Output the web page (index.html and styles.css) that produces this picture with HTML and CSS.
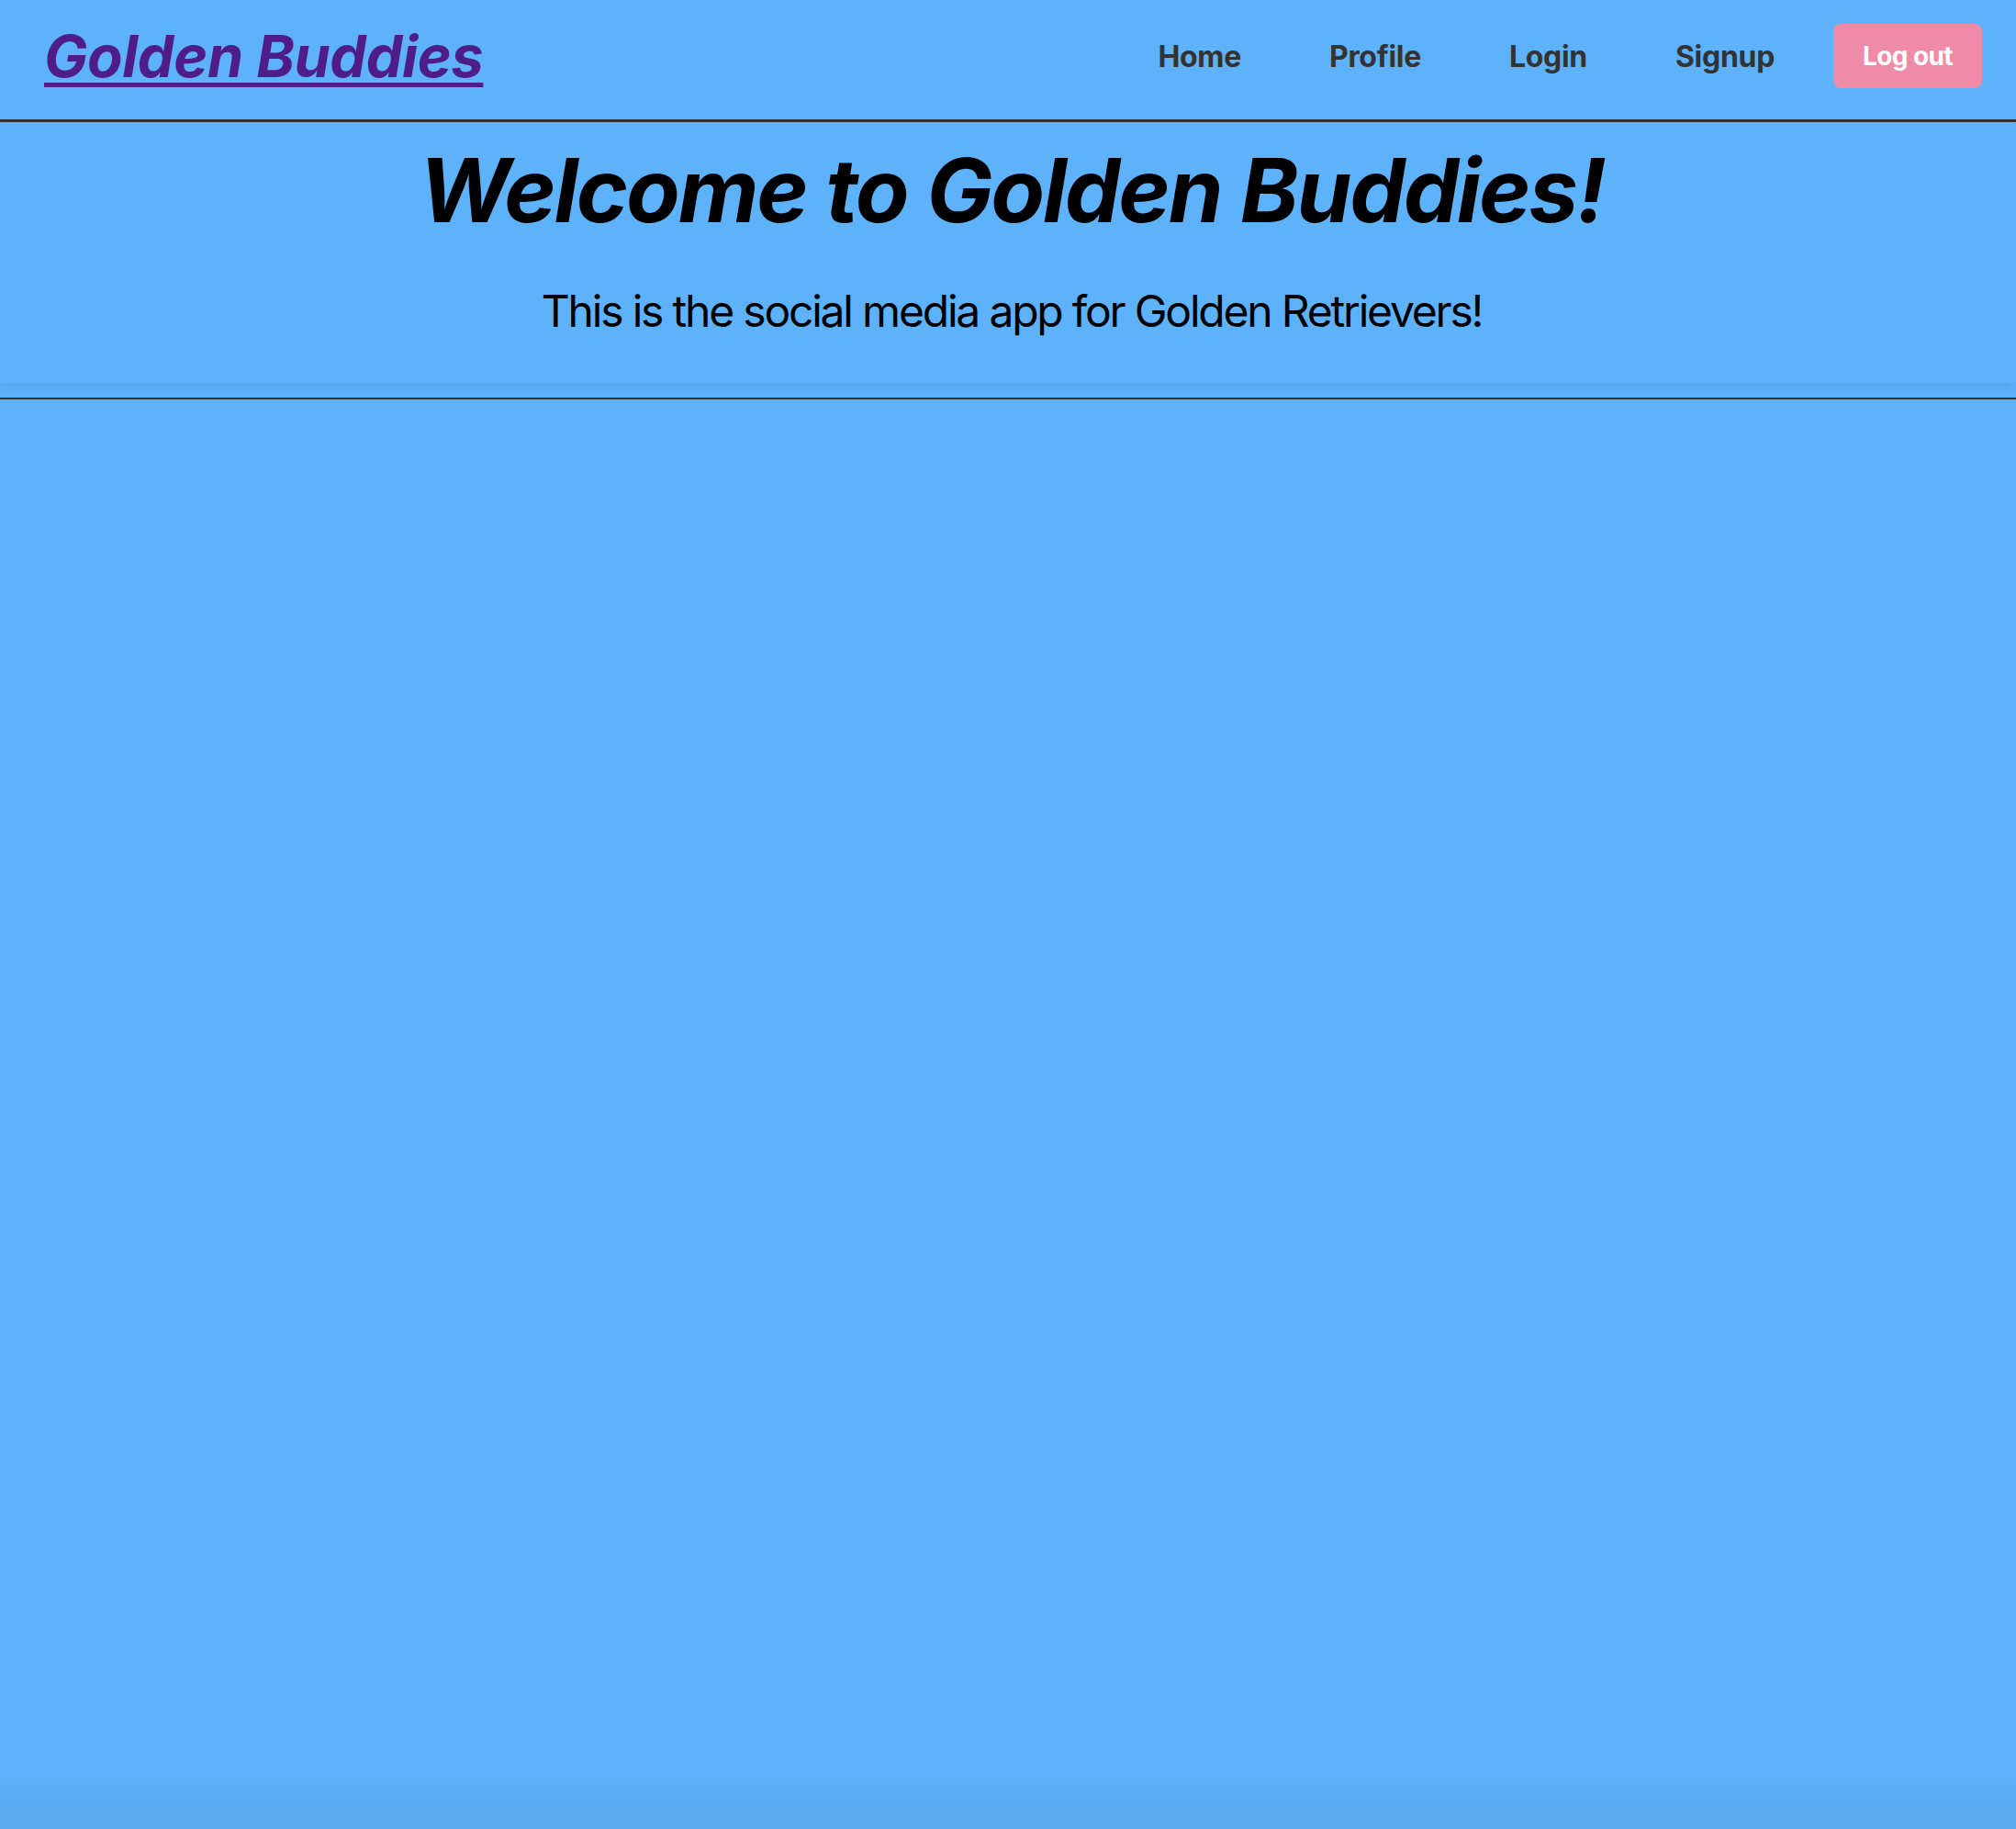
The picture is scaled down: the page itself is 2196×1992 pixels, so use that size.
FILE: index.html
```html
<!DOCTYPE html>
<html lang="en">
<head>
<meta charset="utf-8">
<title>Golden Buddies</title>
<link rel="stylesheet" href="styles.css">
</head>
<body>
<div class="page">
  <header class="navbar">
    <a class="logo" href="#">Golden Buddies</a>
    <nav class="nav">
      <a class="nav-link" href="#">Home</a>
      <a class="nav-link" href="#">Profile</a>
      <a class="nav-link" href="#">Login</a>
      <a class="nav-link" href="#">Signup</a>
      <button class="logout" type="button">Log out</button>
    </nav>
  </header>
  <section class="hero">
    <h1 class="hero-title">Welcome to Golden Buddies!</h1>
    <p class="hero-text">This is the social media app for Golden Retrievers!</p>
  </section>
  <hr class="divider">
  <main class="content"></main>
</div>
</body>
</html>
```

FILE: styles.css
```css
* { box-sizing: border-box; }
html, body {
  margin: 0;
  padding: 0;
  height: 100%;
}
body {
  font-family: Inter, "Noto Sans", sans-serif;
  background: #5eb2fa;
  overflow: hidden;
}
.page {
  min-height: 100%;
  display: flex;
  flex-direction: column;
}
.navbar {
  height: 133px;
  display: flex;
  align-items: center;
  justify-content: space-between;
  padding: 0 37px 8px 48px;
  border-bottom: 3px solid #333333;
}
.logo {
  font-size: 63px;
  font-weight: 700;
  font-style: italic;
  color: #4e1d88;
  text-decoration: underline;
  text-decoration-thickness: 5px;
  text-underline-offset: 6px;
  letter-spacing: -0.4px;
}
.nav {
  display: flex;
  align-items: center;
  gap: 32px;
}
.nav-link {
  font-size: 32px;
  font-weight: 700;
  color: #333333;
  text-decoration: none;
  padding: 0 32px;
  letter-spacing: -0.3px;
}
.logout {
  font-family: Inter, "Noto Sans", sans-serif;
  font-size: 28px;
  font-weight: 700;
  color: #ffffff;
  background: #ef8ba6;
  border: none;
  border-radius: 8px;
  padding: 15px 32px;
  line-height: 40px;
  letter-spacing: -0.6px;
}
.hero {
  text-align: center;
  padding: 26px 0 42px 8px;
  box-shadow: 0 6px 12px rgba(0, 0, 0, 0.06);
}
.hero-title {
  margin: 0;
  font-size: 96px;
  line-height: 1;
  font-weight: 700;
  font-style: italic;
  color: #000;
  letter-spacing: -2.1px;
}
.hero-text {
  margin: 48px 0 0;
  font-size: 48px;
  line-height: 1.5;
  font-weight: 400;
  color: #000;
  letter-spacing: -2.2px;
}
.divider {
  margin: 16px 0 0;
  border: none;
  border-top: 2px solid #333333;
  height: 0;
}
.content {
  flex: 1;
  background: linear-gradient(to bottom, rgba(0,0,0,0) 0, rgba(0,0,0,0) calc(100% - 70px), rgba(0,0,0,0.05) 100%);
}
```
